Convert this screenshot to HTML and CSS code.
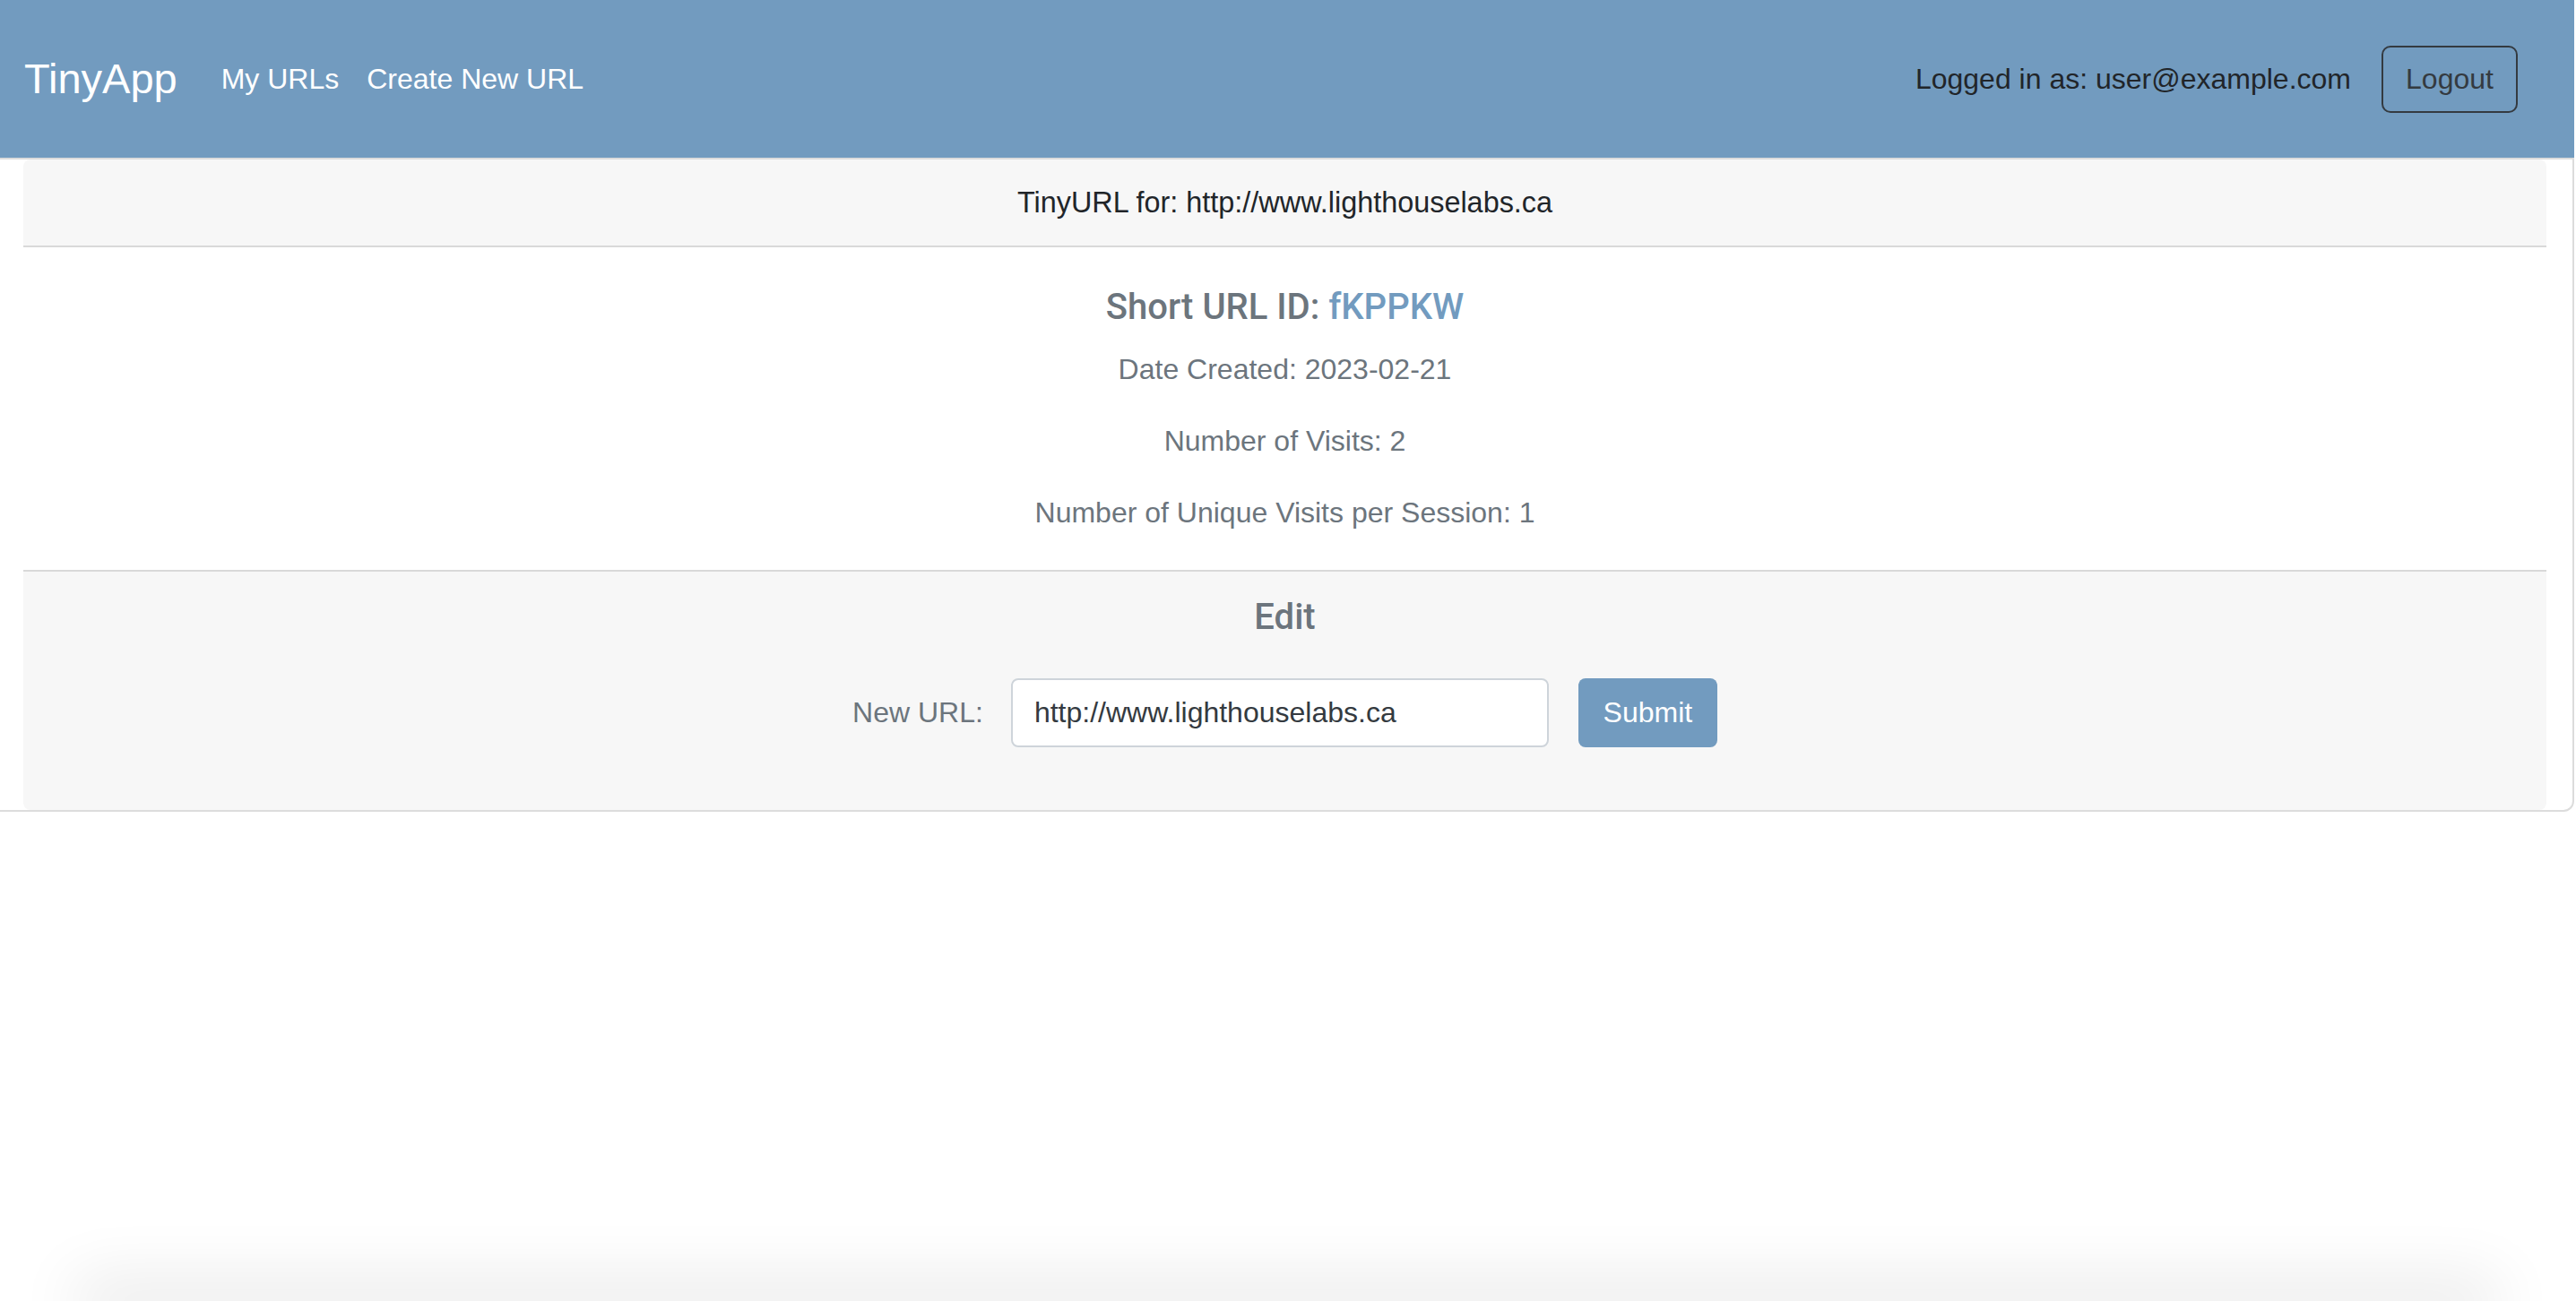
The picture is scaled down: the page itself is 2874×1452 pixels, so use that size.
FILE: index.html
```html
<!DOCTYPE html>
<html lang="en">
<head>
<meta charset="utf-8">
<title>TinyApp</title>
<link rel="stylesheet" href="styles.css">
</head>
<body>
<div class="page">
  <nav class="navbar">
    <a class="brand" href="#">TinyApp</a>
    <div class="nav-links">
      <a class="nav-link" href="#">My URLs</a>
      <a class="nav-link" href="#">Create New URL</a>
    </div>
    <div class="nav-user">
      <span class="user-text">Logged in as: user@example.com</span>
      <button class="btn-logout" type="button">Logout</button>
    </div>
  </nav>
  <main class="frame">
    <section class="card">
      <header class="card-header">TinyURL for: http://www.lighthouselabs.ca</header>
      <div class="card-body">
        <h5 class="card-title">Short URL ID: <a class="short-id" href="#">fKPPKW</a></h5>
        <p class="card-text">Date Created: 2023-02-21</p>
        <p class="card-text">Number of Visits: 2</p>
        <p class="card-text last">Number of Unique Visits per Session: 1</p>
      </div>
      <footer class="card-footer">
        <h5 class="footer-title">Edit</h5>
        <form class="edit-form">
          <label class="form-label" for="newurl">New URL:</label>
          <input class="form-input" id="newurl" type="text" value="http://www.lighthouselabs.ca">
          <button class="btn-submit" type="submit">Submit</button>
        </form>
      </footer>
    </section>
  </main>
  <div class="spacer"></div>
  <div class="window-shadow"></div>
</div>
</body>
</html>
```
FILE: styles.css
```css
html, body {
  margin: 0;
  padding: 0;
  background: #ffffff;
}
body {
  font-family: "Liberation Sans", Arial, sans-serif;
  color: #212529;
  overflow: hidden;
}
.page {
  display: flex;
  flex-direction: column;
  min-height: 100vh;
  width: 2872px;
}
.navbar {
  height: 176px;
  background: #729bbf;
  display: flex;
  align-items: center;
  padding: 0 63px 0 27px;
  box-sizing: border-box;
}
.brand {
  font-size: 47px;
  color: #ffffff;
  text-decoration: none;
  margin-right: 49px;
  line-height: 1;
  padding-bottom: 2px;
}
.nav-links {
  display: flex;
  gap: 31px;
}
.nav-link {
  font-size: 32px;
  color: #ffffff;
  text-decoration: none;
}
.nav-user {
  margin-left: auto;
  display: flex;
  align-items: center;
  gap: 34px;
}
.user-text {
  font-size: 32px;
  color: #212529;
}
.btn-logout {
  width: 152px;
  height: 75px;
  border: 2.5px solid #343a40;
  border-radius: 10px;
  background: transparent;
  color: #343a40;
  font-family: inherit;
  font-size: 32px;
  padding: 0;
}
.frame {
  border-top: 2px solid #dcdcdc;
  border-right: 2px solid #dcdcdc;
  border-bottom: 2px solid #dcdcdc;
  border-bottom-right-radius: 12px;
}
.card {
  margin: 0 29px 0 26px;
  background: #ffffff;
  border-radius: 8px;
}
.card-header {
  height: 96px;
  background: #f7f7f7;
  border-bottom: 2px solid #d9d9d9;
  border-top-left-radius: 8px;
  border-top-right-radius: 8px;
  display: flex;
  align-items: center;
  justify-content: center;
  font-size: 32.4px;
  color: #212529;
}
.card-body {
  padding: 40px 40px 40px;
  text-align: center;
}
.card-title,
.footer-title {
  margin: 0;
  padding-top: 3px;
  font-family: Roboto, "Liberation Sans", Arial, sans-serif;
  font-size: 40px;
  font-weight: 500;
  line-height: 48px;
  color: #6c757d;
}
.card-title {
  margin-bottom: 21px;
}
.short-id {
  color: #729bbf;
  text-decoration: none;
}
.card-text {
  margin: 0 0 32px;
  font-size: 32px;
  line-height: 48px;
  color: #6c757d;
}
.card-text.last {
  margin-bottom: 0;
}
.card-footer {
  background: #f7f7f7;
  border-top: 2px solid #d9d9d9;
  border-bottom-left-radius: 8px;
  border-bottom-right-radius: 8px;
  padding: 24px 40px 70px;
  text-align: center;
}
.footer-title {
  margin-bottom: 44px;
}
.edit-form {
  display: flex;
  justify-content: center;
  align-items: center;
  height: 77px;
}
.form-label {
  font-size: 32px;
  color: #6c757d;
  margin-right: 31px;
}
.form-input {
  width: 600px;
  height: 77px;
  box-sizing: border-box;
  border: 2px solid #ced4da;
  border-radius: 8px;
  background: #ffffff;
  padding: 0 24px;
  font-family: inherit;
  font-size: 32px;
  color: #343a40;
  margin-right: 33px;
}
.btn-submit {
  width: 155px;
  height: 77px;
  border: none;
  border-radius: 8px;
  background: #729bbf;
  color: #ffffff;
  font-family: inherit;
  font-size: 32px;
  padding: 0;
}
.spacer {
  flex: 1;
}
.window-shadow {
  height: 0;
  margin: 0 110px;
  box-shadow: 0 0 70px 26px rgba(0, 0, 0, 0.09);
}
```
